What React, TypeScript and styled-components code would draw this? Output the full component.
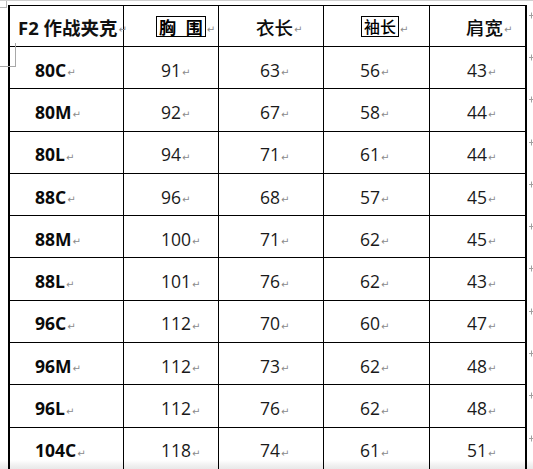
import React from "react";
import styled, { createGlobalStyle } from "styled-components";

const GlobalStyle = createGlobalStyle`
  html, body {
    margin: 0;
    padding: 0;
    background: #ffffff;
  }
  body {
    width: 533px;
    height: 469px;
    overflow: hidden;
    font-family: "Open Sans", "Noto Sans CJK SC", sans-serif;
  }
`;

const Page = styled.div`
  position: relative;
  width: 533px;
  height: 469px;
  box-sizing: border-box;
  padding: 4px 0 0 8px;
  border-top: 1px solid #cfcfcf;
  background: linear-gradient(to bottom, #ffffff 0, #ffffff 459px, #f1f1f1 464px, #e6e6e6 469px);
`;

const CornerTop = styled.div`
  position: absolute;
  left: 0;
  top: 0;
  width: 6px;
  height: 6px;
  border-right: 1px solid #b8b8b8;
  border-bottom: 1px solid #b8b8b8;
`;

const CornerMark = styled.div`
  position: absolute;
  left: 0;
  top: 42px;
  width: 15px;
  height: 23px;
  border-right: 1px solid #a8a8a8;
  border-bottom: 1px solid #a8a8a8;
`;

const Table = styled.div`
  display: grid;
  grid-template-columns: 116px 95px 105px 106px 97px 6px;
  grid-template-rows: 42px;
  grid-auto-rows: 42.3px;
`;

const Cell = styled.div<{ $first?: boolean; $head?: boolean; $last?: boolean; $pad: number }>`
  box-sizing: border-box;
  display: flex;
  align-items: center;
  padding-left: ${(p) => p.$pad}px;
  padding-top: ${(p) => (p.$head ? 1 : 4)}px;
  border-right: ${(p) => (p.$last ? 2 : 1)}px solid #000;
  border-bottom: 1px solid #000;
  border-left: ${(p) => (p.$first ? "2px solid #000" : "none")};
  border-top: ${(p) => (p.$head ? "1.5px solid #000" : "none")};
  color: #111;
  white-space: nowrap;
`;

const Label = styled.span`
  font-family: "Open Sans", sans-serif;
  font-weight: 700;
  font-size: 17.5px;
  color: #0a0a0a;
`;

const Value = styled.span`
  font-family: "Open Sans", sans-serif;
  font-size: 17.5px;
  color: #1a1a1a;
`;

const Title = styled.span`
  font-family: "Open Sans", "Noto Sans CJK SC", sans-serif;
  font-weight: 700;
  font-size: 18.5px;
  color: #111;
`;

const HeadText = styled.span`
  font-family: "Noto Sans CJK SC", sans-serif;
  font-size: 18.5px;
  font-weight: 500;
  color: #0c0c0c;
`;

const Boxed = styled.span<{ $size: number; $bold?: boolean; $spread?: number }>`
  font-family: "Noto Sans CJK SC", sans-serif;
  font-size: ${(p) => p.$size}px;
  font-weight: ${(p) => (p.$bold ? 700 : 500)};
  line-height: 1.15;
  word-spacing: ${(p) => p.$spread ?? 0}px;
  border: 1px solid #000;
  padding: 0 2px;
  color: #000;
`;

const Mark = styled.span`
  font-family: "DejaVu Sans", sans-serif;
  font-size: 10px;
  color: #8a8a8a;
  margin-left: 1px;
  align-self: center;
  padding-top: 6px;
`;

const RowEnd = styled.div`
  padding: 7px 0 0 2px;
  svg {
    display: block;
  }
`;

const EndMark = () => (
  <svg width="5" height="7" viewBox="0 0 5 7">
    <path d="M2.5 0.5V6.5M0 3.5H5" stroke="#a0a0a0" strokeWidth="1" fill="none" />
  </svg>
);

const sizes: [string, number, number, number, number][] = [
  ["80C", 91, 63, 56, 43],
  ["80M", 92, 67, 58, 44],
  ["80L", 94, 71, 61, 44],
  ["88C", 96, 68, 57, 45],
  ["88M", 100, 71, 62, 45],
  ["88L", 101, 76, 62, 43],
  ["96C", 112, 70, 60, 47],
  ["96M", 112, 73, 62, 48],
  ["96L", 112, 76, 62, 48],
  ["104C", 118, 74, 61, 51],
];

const pads = [25, 37, 41, 36, 37];

export default function App() {
  return (
    <>
      <GlobalStyle />
      <Page>
        <CornerTop />
        <CornerMark />
        <Table>
          <Cell $first $head $pad={8}>
            <Title>F2 作战夹克</Title>
            <Mark>↵</Mark>
          </Cell>
          <Cell $head $pad={32}>
            <Boxed $size={17} $bold $spread={6}>胸 围</Boxed>
            <Mark>↵</Mark>
          </Cell>
          <Cell $head $pad={37}>
            <HeadText>衣长</HeadText>
            <Mark>↵</Mark>
          </Cell>
          <Cell $head $pad={37}>
            <Boxed $size={16}>袖长</Boxed>
            <Mark>↵</Mark>
          </Cell>
          <Cell $head $last $pad={36}>
            <HeadText>肩宽</HeadText>
            <Mark>↵</Mark>
          </Cell>
          <RowEnd>
            <EndMark />
          </RowEnd>
          {sizes.map((row) => (
            <React.Fragment key={row[0]}>
              <Cell $first $pad={pads[0]}>
                <Label>{row[0]}</Label>
                <Mark>↵</Mark>
              </Cell>
              {row.slice(1).map((v, i) => (
                <Cell key={i} $last={i === 3} $pad={pads[i + 1]}>
                  <Value>{v}</Value>
                  <Mark>↵</Mark>
                </Cell>
              ))}
              <RowEnd>
                <EndMark />
              </RowEnd>
            </React.Fragment>
          ))}
        </Table>
      </Page>
    </>
  );
}
